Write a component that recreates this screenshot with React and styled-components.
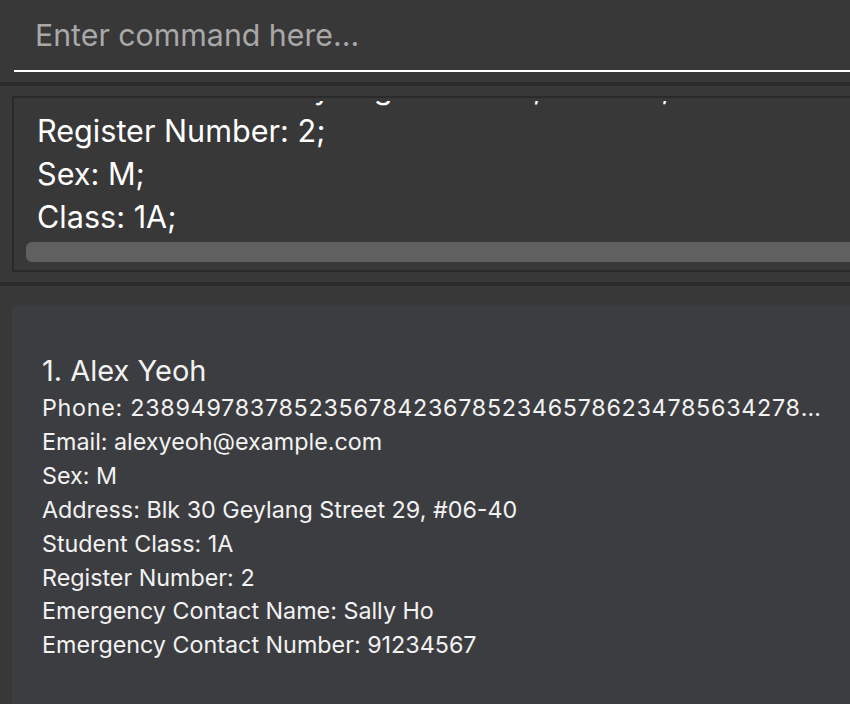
import React from "react";
import styled, { createGlobalStyle } from "styled-components";

const GlobalStyle = createGlobalStyle`
  html, body {
    margin: 0;
    padding: 0;
    background: #383838;
    overflow: hidden;
  }
  body {
    font-family: Inter, "Liberation Sans", sans-serif;
  }
`;

const Window = styled.div`
  width: 100%;
  height: 704px;
  display: flex;
  flex-direction: column;
  background: #383838;
  overflow: hidden;
`;

const CommandBar = styled.div`
  height: 82px;
  padding: 0 0 0 14px;
  box-sizing: border-box;
  display: flex;
  flex-direction: column;
`;

const CommandInput = styled.input`
  height: 72px;
  padding: 0 0 0 21px;
  margin: 0;
  box-sizing: border-box;
  border: none;
  border-bottom: 2px solid #ffffff;
  background: transparent;
  color: #ffffff;
  font-family: Inter, "Liberation Sans", sans-serif;
  font-size: 30.3px;
  outline: none;
  &::placeholder {
    color: #a8a8a8;
  }
`;

const Divider = styled.div`
  height: 4px;
  background: #2b2b2b;
  flex-shrink: 0;
`;

const ResultArea = styled.div`
  padding: 10px 0 10px 12px;
  box-sizing: border-box;
  height: 196px;
`;

const ResultBox = styled.div`
  height: 176px;
  border: 2px solid #2a2a2a;
  border-right: none;
  box-sizing: border-box;
  display: flex;
  flex-direction: column;
  overflow: hidden;
`;

const ResultText = styled.div`
  height: 137px;
  margin-top: 3px;
  overflow: hidden;
  display: flex;
  flex-direction: column;
  justify-content: flex-end;
  padding-left: 23px;
`;

const ResultLine = styled.div`
  font-size: 30.6px;
  line-height: 43px;
  color: #ffffff;
  white-space: nowrap;
  flex-shrink: 0;
`;

const ScrollThumb = styled.div`
  height: 20px;
  margin: 4px 0 0 12px;
  background: #606060;
  border-radius: 6px 0 0 6px;
`;

const ListArea = styled.div`
  flex: 1;
  padding: 20px 0 0 12px;
  display: flex;
  flex-direction: column;
`;

const PersonCard = styled.div`
  flex: 1;
  background: #3c3d40;
  padding: 47px 0 0 30px;
  display: flex;
  flex-direction: column;
`;

const Name = styled.div`
  font-size: 29px;
  line-height: 36px;
  margin-bottom: 2px;
  color: #f2f2f2;
`;

const Detail = styled.div`
  width: 790px;
  font-size: 23.3px;
  line-height: 33.9px;
  letter-spacing: ${props => (props.$wide ? "0.72px" : "0")};
  color: #f2f2f2;
  white-space: nowrap;
  overflow: hidden;
  text-overflow: ellipsis;
`;

const resultLines = [
  "Phone: 23894978378523567842367852346578623478563427823;",
  "Address: Blk 30 Geylang Street 29, #06-40;",
  "Register Number: 2;",
  "Sex: M;",
  "Class: 1A;",
];

const details = [
  { text: "Phone: 238949783785235678423678523465786234785634278234785623478", wide: true },
  { text: "Email: alexyeoh@example.com" },
  { text: "Sex: M" },
  { text: "Address: Blk 30 Geylang Street 29, #06-40" },
  { text: "Student Class: 1A" },
  { text: "Register Number: 2" },
  { text: "Emergency Contact Name: Sally Ho" },
  { text: "Emergency Contact Number: 91234567" },
];

const App = () => {
  return (
    <Window>
      <GlobalStyle />
      <CommandBar>
        <CommandInput placeholder="Enter command here..." />
      </CommandBar>
      <Divider />
      <ResultArea>
        <ResultBox>
          <ResultText>
            {resultLines.map(line => (
              <ResultLine key={line}>{line}</ResultLine>
            ))}
          </ResultText>
          <ScrollThumb />
        </ResultBox>
      </ResultArea>
      <Divider />
      <ListArea>
        <PersonCard>
          <Name>1. Alex Yeoh</Name>
          {details.map(d => (
            <Detail key={d.text} $wide={d.wide}>{d.text}</Detail>
          ))}
        </PersonCard>
      </ListArea>
    </Window>
  );
};

export default App;
